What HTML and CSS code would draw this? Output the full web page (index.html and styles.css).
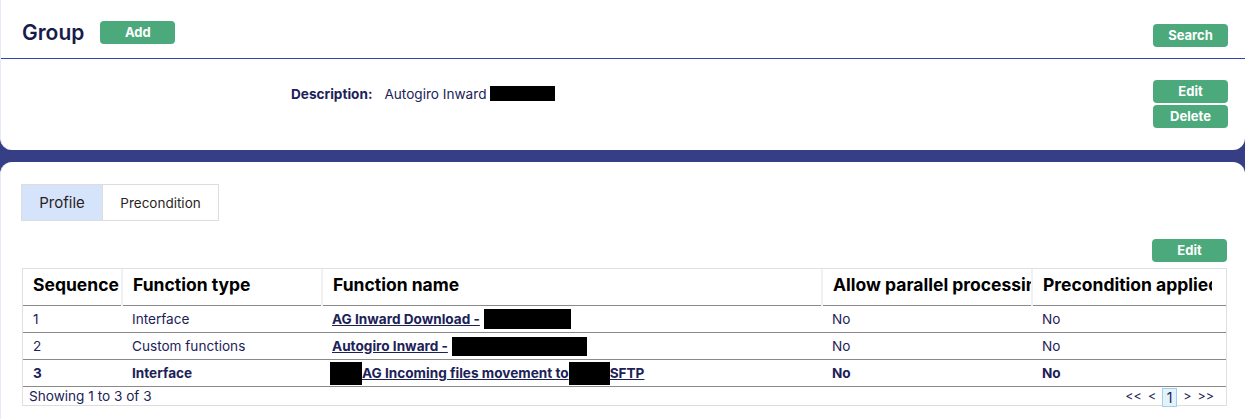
FILE: index.html
```html
<!DOCTYPE html>
<html lang="en">
<head>
<meta charset="utf-8">
<title>Group</title>
<link rel="stylesheet" href="styles.css">
</head>
<body>
<div class="panel panel-top">
  <div class="header">
    <h1 class="title">Group</h1>
    <button class="btn btn-add">Add</button>
    <button class="btn btn-search">Search</button>
  </div>
  <div class="details">
    <div class="desc">
      <span class="desc-label">Description:</span>
      <span class="desc-value">Autogiro Inward <span class="redact r-desc"></span></span>
    </div>
    <div class="actions">
      <button class="btn">Edit</button>
      <button class="btn">Delete</button>
    </div>
  </div>
</div>
<div class="panel panel-bottom">
  <div class="tabs">
    <div class="tab tab-active">Profile</div>
    <div class="tab tab-plain">Precondition</div>
  </div>
  <div class="toolbar">
    <button class="btn">Edit</button>
  </div>
  <div class="grid">
    <table class="tbl">
      <colgroup>
        <col class="c1"><col class="c2"><col class="c3"><col class="c4"><col class="c5">
      </colgroup>
      <thead>
        <tr>
          <th><div class="th-in">Sequence</div></th>
          <th><div class="th-in">Function type</div></th>
          <th><div class="th-in">Function name</div></th>
          <th><div class="th-in">Allow parallel processing</div></th>
          <th class="th-last"><div class="th-in">Precondition applied</div></th>
        </tr>
      </thead>
      <tbody>
        <tr>
          <td>1</td>
          <td>Interface</td>
          <td><a class="lnk" href="#">AG Inward Download - <span class="redact r1"></span></a></td>
          <td>No</td>
          <td>No</td>
        </tr>
        <tr>
          <td>2</td>
          <td>Custom functions</td>
          <td><a class="lnk" href="#">Autogiro Inward - <span class="redact r2"></span></a></td>
          <td>No</td>
          <td>No</td>
        </tr>
        <tr class="row-bold">
          <td>3</td>
          <td>Interface</td>
          <td class="cell-r3"><span class="redact r3a"></span><a class="lnk" href="#">AG Incoming files movement to<span class="redact r3b"></span>SFTP</a></td>
          <td>No</td>
          <td>No</td>
        </tr>
      </tbody>
    </table>
    <div class="footer">
      <span class="info">Showing 1 to 3 of 3</span>
      <div class="pager">
        <span class="pg">&lt;&lt;</span>
        <span class="pg">&lt;</span>
        <span class="pg pg-cur">1</span>
        <span class="pg">&gt;</span>
        <span class="pg">&gt;&gt;</span>
      </div>
    </div>
  </div>
</div>
</body>
</html>
```
FILE: styles.css
```css
html, body {
  margin: 0;
  padding: 0;
}
body {
  background: #363f86;
  font-family: Inter, "Liberation Sans", sans-serif;
  color: #1c2257;
  height: 419px;
  overflow: hidden;
}
.panel {
  background: #ffffff;
  border-left: 1px solid #e6ebf7;
  box-sizing: border-box;
}
.panel-top {
  height: 150px;
  border-radius: 0 0 12px 12px;
}
.header {
  display: flex;
  align-items: flex-start;
  height: 37px;
  padding: 21px 17px 0 21px;
  border-bottom: 1px solid #3443b0;
}
.title {
  margin: 0;
  font-size: 21px;
  line-height: 23px;
  font-weight: 600;
  color: #171c4a;
}
.btn {
  width: 75px;
  height: 23px;
  border: none;
  border-radius: 4px;
  background: #4ca97b;
  color: #ffffff;
  font-family: Inter, "Liberation Sans", sans-serif;
  font-size: 13px;
  font-weight: 700;
  line-height: 23px;
  padding: 0;
  display: block;
}
.btn-add {
  margin-left: 16px;
}
.btn-search {
  margin-left: auto;
  margin-top: 3px;
}
.details {
  display: flex;
  padding: 21px 17px 0 0;
}
.desc {
  flex: 1;
  display: flex;
  align-items: center;
  padding-left: 290px;
  margin-top: 6px;
  font-size: 13.6px;
  height: 15px;
}
.desc-label {
  font-weight: 700;
  color: #1c2257;
  margin-right: 12px;
}
.desc-value {
  display: flex;
  align-items: center;
}
.redact {
  display: inline-block;
  background: #000000;
  vertical-align: middle;
}
.r-desc {
  width: 65px;
  height: 15px;
  margin-left: 4px;
}
.actions {
  display: flex;
  flex-direction: column;
  gap: 2px;
}
.panel-bottom {
  margin-top: 12px;
  height: 257px;
  border-radius: 12px 12px 0 0;
  padding: 22px 18px 0 20px;
}
.tabs {
  display: flex;
}
.tab {
  height: 35px;
  border: 1px solid #dddddd;
  display: flex;
  align-items: center;
  justify-content: center;
  color: #2a1f24;
}
.tab-active {
  width: 80px;
  background: #d6e4fb;
  font-size: 15px;
}
.tab-plain {
  width: 115px;
  border-left: none;
  font-size: 13.5px;
}
.toolbar {
  display: flex;
  justify-content: flex-end;
  margin-top: 18px;
}
.grid {
  margin-top: 6px;
  margin-left: 1px;
  border: 1px solid #e0e0e0;
  border-bottom-color: #dddddd;
}
.tbl {
  width: 100%;
  table-layout: fixed;
  border-collapse: collapse;
}
.c1 { width: 99px; }
.c2 { width: 200px; }
.c3 { width: 500px; }
.c4 { width: 210px; }
.c5 { width: auto; }
.tbl th {
  height: 31px;
  padding: 0 0 5px 10px;
  text-align: left;
  font-size: 17.5px;
  font-weight: 700;
  color: #000000;
  border-bottom: 1px solid #8a8a8a;
  border-left: 2px solid #f1f1f1;
  vertical-align: middle;
}
.tbl th:first-child {
  border-left: none;
}
.th-in {
  overflow: hidden;
  white-space: nowrap;
}
.th-last {
  padding-right: 14px !important;
}
.tbl td {
  height: 26px;
  padding: 0 0 0 10px;
  font-size: 13.6px;
  border-bottom: 1px solid #8a8a8a;
  white-space: nowrap;
  vertical-align: middle;
  color: #1c2257;
}
.row-bold td {
  font-weight: 700;
}
.lnk {
  color: #1c2257;
  font-weight: 700;
  text-decoration: underline;
  display: inline-flex;
  align-items: center;
}
.r1 {
  width: 87px;
  height: 20px;
  margin-left: 4px;
}
.r2 {
  width: 135px;
  height: 19px;
  margin-left: 4px;
}
.cell-r3 {
  padding-left: 8px !important;
}
.row-bold .cell-r3 > * {
  vertical-align: middle;
}
.r3a {
  width: 32px;
  height: 23px;
}
.r3b {
  width: 41px;
  height: 23px;
}
.footer {
  display: flex;
  align-items: center;
  justify-content: space-between;
  height: 18px;
  padding: 0 9px 0 6px;
  font-size: 13.6px;
}
.pager {
  display: flex;
  align-items: center;
  font-size: 12.5px;
  color: #1c2257;
}
.pg {
  padding: 0 3px;
  line-height: 16px;
}
.pg-cur {
  background: #e2f3fc;
  border: 1px solid #9ed2ea;
  width: 13px;
  height: 17px;
  line-height: 17px;
  text-align: center;
  padding: 0;
  font-size: 14px;
  margin: 2px 3px 0;
}
```
